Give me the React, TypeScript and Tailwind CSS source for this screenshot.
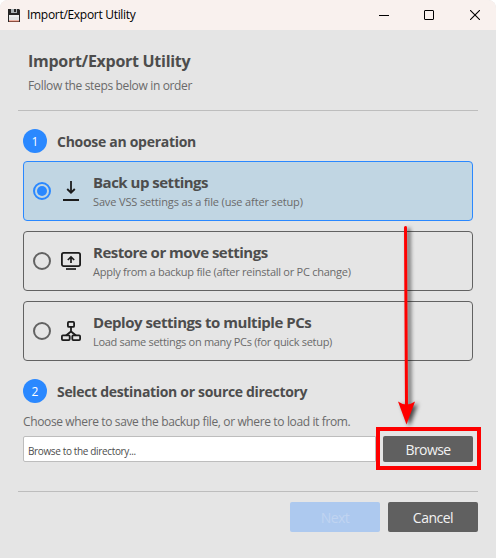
import type { ReactNode } from 'react'

interface OperationProps {
  title: string
  description: string
  titleClass: string
  descriptionClass: string
  icon: ReactNode
  selected?: boolean
}

function FloppyIcon() {
  return (
    <svg width="12" height="13" viewBox="0 0 12 13" className="shrink-0">
      <path d="M0 0h11l1 1v12H0z" fill="#262626" />
      <path d="M3 0h6v4H3z" fill="#aab2b5" />
      <path d="M6 0h2v3H6z" fill="#262626" />
      <path d="M1 6h10v6H1z" fill="#eceeee" />
      <path d="M1 8h10v3H1z" fill="#dfe3e4" />
      <path d="M1 11.500h10v1H1z" fill="#ef7658" />
    </svg>
  )
}

function DownloadIcon() {
  return (
    <svg width="20" height="22" viewBox="0 0 20 22" fill="none" stroke="#1c1c1c" className="shrink-0">
      <path d="M10 1v11.5" strokeWidth="1.8" />
      <path d="M6.2 9 10 12.7 13.8 9" strokeWidth="1.9" />
      <path d="M2 20h16" strokeWidth="1.8" />
    </svg>
  )
}

function RestoreIcon() {
  return (
    <svg width="20" height="22" viewBox="0 0 20 22" fill="none" stroke="#1c1c1c" className="shrink-0">
      <rect x="0.9" y="2.9" width="18.2" height="13.2" rx="1.8" strokeWidth="1.8" />
      <path d="M10 13V7.5M6.8 10 10 7l3.2 3" strokeWidth="1.7" />
      <path d="M5 19h10" strokeWidth="1.7" />
    </svg>
  )
}

function DeployIcon() {
  return (
    <svg width="20" height="22" viewBox="0 0 20 22" fill="none" stroke="#1c1c1c" strokeWidth="1.8" className="shrink-0">
      <rect x="6.9" y="1.9" width="6.2" height="5" rx="1" />
      <path d="M10 7v4M5 15.5 10 11.5l5 4" />
      <rect x="0.9" y="15.4" width="7.8" height="4.7" rx="1" />
      <rect x="11.3" y="15.4" width="7.8" height="4.7" rx="1" />
    </svg>
  )
}

function Operation({ title, description, titleClass, descriptionClass, icon, selected }: OperationProps) {
  return (
    <label
      className={`flex h-[60px] items-center rounded border pl-[9px] ${
        selected ? 'border-[#2a88ff] bg-[#c1d6e3]' : 'border-[#626262]'
      }`}
    >
      <span
        className={`flex size-[18px] shrink-0 items-center justify-center rounded-full border-2 ${
          selected ? 'border-[#2a88ff]' : 'border-[#626262]'
        }`}
      >
        {selected && <span className="size-2.5 rounded-full bg-[#2a88ff]" />}
      </span>
      <span className="ml-2.5 flex">{icon}</span>
      <span className="ml-3 flex flex-col whitespace-nowrap">
        <span className={`text-[15px] leading-5 font-bold text-[#4d4d4d] ${titleClass}`}>{title}</span>
        <span className={`pt-px text-[11px] leading-[18px] text-[#6a6a6a] ${descriptionClass}`}>{description}</span>
      </span>
    </label>
  )
}

function StepHeading({ step, className, children }: { step: number; className: string; children: string }) {
  return (
    <div className="flex h-6 items-center gap-2.5">
      <span className="flex size-6 items-center justify-center rounded-full bg-[#2a88ff] pt-px text-xs text-white">{step}</span>
      <h2 className={`pt-0.5 text-[14px] leading-6 font-bold whitespace-nowrap text-[#4d4d4d] ${className}`}>{children}</h2>
    </div>
  )
}

export default function App() {
  return (
    <div className="relative h-[558px] w-[496px] overflow-hidden rounded-t-lg bg-[#e5e5e5] font-['Open_Sans','Noto_Sans',sans-serif]">
      <header className="flex h-[30px] items-center bg-[#f9f1ee] pl-2">
        <FloppyIcon />
        <span className="ml-[7px] text-[12px] whitespace-nowrap text-black tracking-[-0.3px]">Import/Export Utility</span>
        <div className="mr-4 mb-px ml-auto flex items-center text-black">
          <svg width="10" height="10" viewBox="0 0 10 10" className="mr-[35px]">
            <path d="M0 5.5h10" stroke="currentColor" />
          </svg>
          <svg width="10" height="10" viewBox="0 0 10 10" className="mr-9">
            <rect x="0.5" y="0.5" width="9" height="9" rx="0.5" fill="none" stroke="currentColor" />
          </svg>
          <svg width="10" height="10" viewBox="0 0 10 10">
            <path d="m0 0 10 10M10 0 0 10" stroke="currentColor" strokeWidth="1.1" />
          </svg>
        </div>
      </header>

      <div className="ml-7 flex flex-col pt-5 whitespace-nowrap">
        <h1 className="text-[16px] leading-[22px] font-bold text-[#4d4d4d] tracking-[-0.28px]">Import/Export Utility</h1>
        <p className="pt-0.5 text-[12px] leading-6 text-[#6a6a6a] tracking-[-0.35px]">Follow the steps below in order</p>
      </div>
      <hr className="mx-[18px] mt-3 border-[#bdbdbd]" />

      <main className="mr-[23px] ml-[23px] w-[450px] pt-[18px]">
        <StepHeading step={1} className="tracking-[-0.29px]">Choose an operation</StepHeading>
        <div className="mt-2 flex flex-col gap-2.5">
          <Operation
            title="Back up settings"
            description="Save VSS settings as a file (use after setup)"
            titleClass="tracking-[-0.5px]"
            descriptionClass="tracking-[-0.14px]"
            icon={<DownloadIcon />}
            selected
          />
          <Operation
            title="Restore or move settings"
            description="Apply from a backup file (after reinstall or PC change)"
            titleClass="tracking-[-0.5px]"
            descriptionClass="tracking-[-0.26px]"
            icon={<RestoreIcon />}
          />
          <Operation
            title="Deploy settings to multiple PCs"
            description="Load same settings on many PCs (for quick setup)"
            titleClass="tracking-[-0.46px]"
            descriptionClass="tracking-[-0.31px]"
            icon={<DeployIcon />}
          />
        </div>

        <div className="mt-[18px]">
          <StepHeading step={2} className="tracking-[-0.32px]">Select destination or source directory</StepHeading>
        </div>
        <p className="mt-2 text-[12px] leading-[22px] whitespace-nowrap text-[#6a6a6a] tracking-[-0.37px]">
          Choose where to save the backup file, or where to load it from.
        </p>
        <div className="mt-[3px] flex h-[26px]">
          <div className="flex flex-1 items-center rounded-l-xs border border-[#bdbdbd] bg-white pt-1 pl-1 text-[10px] text-[#4d4d4d] tracking-[-0.36px]">
            Browse to the directory...
          </div>
          <div className="relative ml-[7px] flex w-[90px]">
            <button className="flex-1 rounded-xs bg-[#606060] pt-px text-[14px] text-[#f2f2f2] tracking-[-0.6px]">Browse</button>
            <div className="absolute -top-[9px] -left-[7px] h-[43px] w-[105px] border-4 border-[#fe0000]" />
          </div>
        </div>
      </main>

      <hr className="mx-[18px] mt-[29px] border-[#bdbdbd]" />
      <footer className="mr-[18px] flex justify-end gap-2 pt-2.5 text-[14px] tracking-[-0.5px]">
        <button className="h-[30px] w-[90px] rounded-xs bg-[#adc9ef] pt-px text-[#c0d4f1]">Next</button>
        <button className="h-[30px] w-[90px] rounded-xs bg-[#606060] pt-px text-[#f2f2f2]">Cancel</button>
      </footer>

      {/* callout arrow pointing at the Browse button */}
      <svg
        width="30"
        height="204"
        viewBox="0 0 30 204"
        className="pointer-events-none absolute top-[224px] left-[391px] overflow-visible drop-shadow-[3px_2px_2px_rgba(0,0,0,0.7)]"
      >
        <path d="M14.5 3.5 15.5 182" stroke="#fe0000" strokeWidth="3" strokeLinecap="round" />
        <path d="M7 177.500q8.500 6 17 0l-8.500 23z" fill="#fe0000" />
      </svg>
    </div>
  )
}
